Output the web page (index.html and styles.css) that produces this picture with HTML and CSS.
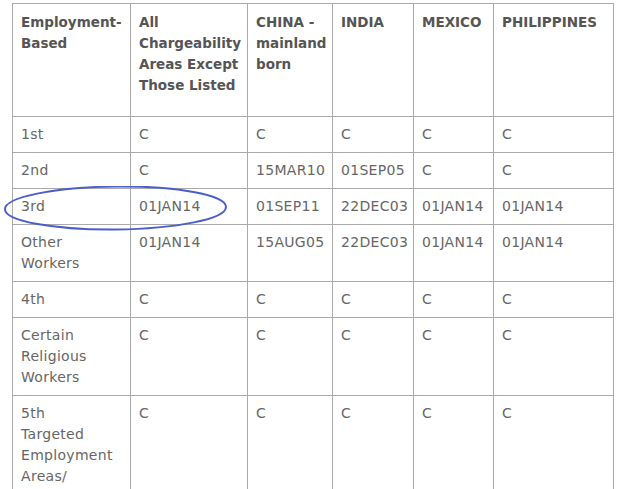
FILE: index.html
```html
<!DOCTYPE html>
<html>
<head>
<meta charset="utf-8">
<link rel="stylesheet" href="styles.css">
</head>
<body>
<div class="wrap">
<table class="bulletin">
  <colgroup>
    <col class="c1"><col class="c2"><col class="c3"><col class="c4"><col class="c5"><col class="c6">
  </colgroup>
  <thead>
    <tr>
      <th>Employment-<br>Based</th>
      <th>All Chargeability Areas Except Those Listed</th>
      <th>CHINA - mainland born</th>
      <th>INDIA</th>
      <th>MEXICO</th>
      <th>PHILIPPINES</th>
    </tr>
  </thead>
  <tbody>
    <tr><td>1st</td><td>C</td><td>C</td><td>C</td><td>C</td><td>C</td></tr>
    <tr><td>2nd</td><td>C</td><td>15MAR10</td><td>01SEP05</td><td>C</td><td>C</td></tr>
    <tr><td>3rd</td><td>01JAN14</td><td>01SEP11</td><td>22DEC03</td><td>01JAN14</td><td>01JAN14</td></tr>
    <tr><td>Other Workers</td><td>01JAN14</td><td>15AUG05</td><td>22DEC03</td><td>01JAN14</td><td>01JAN14</td></tr>
    <tr><td>4th</td><td>C</td><td>C</td><td>C</td><td>C</td><td>C</td></tr>
    <tr><td>Certain Religious Workers</td><td>C</td><td>C</td><td>C</td><td>C</td><td>C</td></tr>
    <tr class="tall"><td>5th<br>Targeted Employment Areas/ Regional Centers</td><td>C</td><td>C</td><td>C</td><td>C</td><td>C</td></tr>
  </tbody>
</table>
<svg class="circle" width="230" height="50" viewBox="0 0 230 50">
  <ellipse cx="113.5" cy="22" rx="110.5" ry="21.5" fill="none" stroke="#4a5fcc" stroke-width="2" transform="rotate(-0.6 113.5 22)"/>
</svg>
</div>
</body>
</html>
```
FILE: styles.css
```css
html, body {
  margin: 0;
  padding: 0;
  background: #fff;
  overflow: hidden;
}
.wrap {
  position: relative;
  padding: 3px 0 0 12px;
}
.bulletin {
  border-collapse: collapse;
  table-layout: fixed;
  width: 602px;
  font-family: "DejaVu Sans", Verdana, sans-serif;
  font-size: 14px;
  line-height: 21px;
  color: #666;
}
.c1 { width: 118px; }
.c2 { width: 117px; }
.c3 { width: 85px; }
.c4 { width: 81px; }
.c5 { width: 80px; }
.c6 { width: 120px; }
.bulletin th,
.bulletin td {
  border: 1px solid #aaa;
  padding: 7px 8px;
  text-align: left;
  vertical-align: top;
}
.bulletin td {
  letter-spacing: 0.3px;
}
.bulletin th {
  color: #555;
  font-size: 13.5px;
  font-weight: bold;
  padding: 8px 8px 20px;
}
.circle {
  position: absolute;
  left: 2px;
  top: 186px;
}
```
